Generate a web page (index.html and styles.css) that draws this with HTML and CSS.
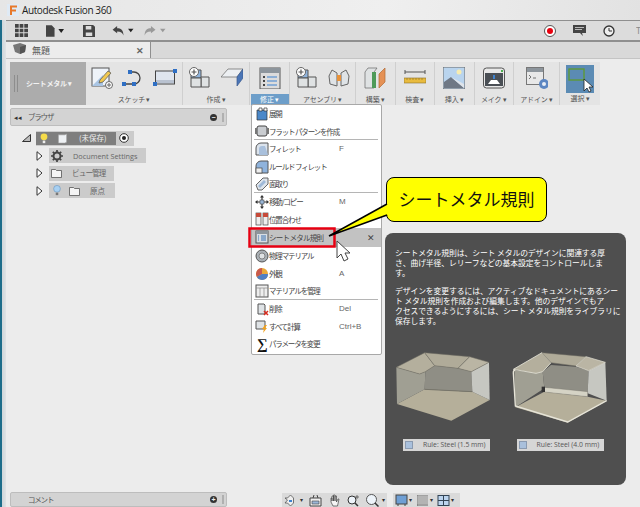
FILE: index.html
```html
<!DOCTYPE html>
<html lang="ja">
<head>
<meta charset="utf-8">
<title>Autodesk Fusion 360</title>
<link rel="stylesheet" href="styles.css">
</head>
<body>
<div class="window">
  <div class="glass"></div>
  <div class="app">
    <header class="titlebar">
      <svg class="logo" viewBox="0 0 12 12"><rect width="12" height="12" fill="#dfeaf5"/><path d="M3 1.5h7v2H5v2h4v2H5V11H3z" fill="#e8792b"/></svg>
      <span class="apptitle">Autodesk Fusion 360</span>
    </header>
    <div class="qat">
      <svg class="q1" viewBox="0 0 14 14"><path fill="#444" d="M0 0h4v4H0zM5 0h4v4H5zM10 0h4v4h-4zM0 5h4v4H0zM5 5h4v4H5zM10 5h4v4h-4zM0 10h4v4H0zM5 10h4v4H5zM10 10h4v4h-4z"/></svg>
      <svg class="q2" viewBox="0 0 20 12"><path fill="#444" d="M0 0h6l3 3v9H0z"/><path fill="#222" d="M13 4h6l-3 4z"/></svg>
      <svg class="q3" viewBox="0 0 13 13"><path fill="#444" d="M0 0h11l2 2v11H0z"/><path fill="#ddd" d="M3 1h6v4H3zM3 8h7v4H3z"/></svg>
      <svg class="q4" viewBox="0 0 24 11"><path fill="#444" d="M0 4l5-4v2.500c4 0 7 2 7 8-1-3-3-4.500-7-4.500V8z"/><path fill="#222" d="M17 3h6l-3 4z"/></svg>
      <svg class="q5" viewBox="0 0 24 11"><path fill="#9a9a9a" d="M12 4L7 0v2.500c-4 0-7 2-7 8 1-3 3-4.500 7-4.500V8z"/><path fill="#999" d="M17 3h6l-3 4z"/></svg>
      <span class="grow"></span>
      <svg class="r1" viewBox="0 0 12 12"><circle cx="6" cy="6" r="5.500" fill="#fff" stroke="#555"/><circle cx="6" cy="6" r="3" fill="#e8000f"/></svg>
      <svg class="r2" viewBox="0 0 13 11"><path fill="#444" d="M0 0h13v8H9l1 3-3-3H0z"/><path fill="#bbb" d="M2 2h9v1H2zM2 4h7v1H2z"/></svg>
      <svg class="r3" viewBox="0 0 12 12"><circle cx="6" cy="6" r="5" fill="#eee" stroke="#333" stroke-width="1.300"/><path d="M6 3v3h3" fill="none" stroke="#333"/></svg>
      <span class="cut">T</span>
    </div>
    <div class="tabs">
      <div class="tab">
        <svg class="tabicon" viewBox="0 0 13 11"><path fill="#777" d="M0 2l7-2 6 2-1 7-5 2-5-2z"/><path fill="#555" d="M7 4l6-2-1 7-5 2z"/></svg>
        <span class="tabname">無題</span>
        <span class="tabx">✕</span>
      </div>
    </div>
    <div class="ribbon">
      <div class="workspace-sel"><span class="grip"></span><span class="wstext">シートメタル ▾</span></div>

      <div class="group g-sketch">
        <div class="icons">
          <svg class="ic" viewBox="0 0 22 22"><rect x="1" y="1" width="17" height="18" fill="#eef3f9" stroke="#555"/><path d="M1 19L12 8l0 11z" fill="#a9c5e4"/><path d="M9 13l8-9 3 2-8 9-4 1z" fill="#f0c850" stroke="#555" stroke-width=".7"/><circle cx="18" cy="18" r="3.500" fill="#fff" stroke="#666"/><path d="M18 16v4M16 18h4" stroke="#666"/></svg>
          <svg class="ic ic-w" viewBox="0 0 24 22"><path d="M3 17h10a6 6 0 0 0 0-12H9" fill="none" stroke="#444" stroke-width="1.300"/><path d="M1 15h4v4H1zM11 15h4v4h-4zM7 3h4v4H7z" fill="#2f6fc4"/></svg>
          <svg class="ic ic-w" viewBox="0 0 24 22"><rect x="2.500" y="4" width="19" height="13" fill="#dfe5ee" stroke="#444"/><path d="M3 16h18v-3H3z" fill="#b9c2d0"/><path d="M0 15h4v4H0zM20 2h4v4h-4z" fill="#2f6fc4"/></svg>
        </div>
        <div class="glabel">スケッチ ▾</div>
      </div>

      <div class="group g-create">
        <div class="icons">
          <svg class="ic" viewBox="0 0 22 22"><path d="M2 3h10v8H2z" fill="#8fb3dc" stroke="#555"/><path d="M12 10h8v10h-8z" fill="#dfe2e3" stroke="#555"/><path d="M2 11h10v9H2z" fill="#dfe2e3" stroke="#555"/><circle cx="5" cy="5" r="4.500" fill="#fff" stroke="#666"/><path d="M5 2.500v5M2.500 5h5" stroke="#555" stroke-width="1.200"/></svg>
          <svg class="ic" viewBox="0 0 22 22"><path d="M7 2h15L16 10H0z" fill="#eceff2" stroke="#666" stroke-width=".7"/><path d="M16 10l6-8v9l-6 8z" fill="#4a75b6" stroke="#3a5a8f" stroke-width=".7"/></svg>
        </div>
        <div class="glabel">作成 ▾</div>
      </div>

      <div class="group g-modify">
        <div class="icons">
          <svg class="ic" viewBox="0 0 22 22"><rect x="1" y="1" width="20" height="21" fill="#dcdcdc" stroke="#555"/><path d="M1 1h20v5H1z" fill="#8d959c"/><path d="M4 9h2v2H4zM4 13h2v2H4zM4 17h2v2H4z" fill="#444"/><path d="M8 10h10M8 14h10M8 18h10" stroke="#3d82cf" stroke-width="1.200"/></svg>
        </div>
        <div class="glabel active">修正 ▾</div>
      </div>

      <div class="group g-assemble">
        <div class="icons">
          <svg class="ic" viewBox="0 0 22 22"><path d="M2 3h10v8H2z" fill="#8fb3dc" stroke="#555"/><path d="M12 10h8v10h-8z" fill="#dfe2e3" stroke="#555"/><path d="M2 11h10v9H2z" fill="#dfe2e3" stroke="#555"/><circle cx="5" cy="5" r="4.500" fill="#fff" stroke="#666"/><path d="M5 2.500v5M2.500 5h5" stroke="#555" stroke-width="1.200"/></svg>
          <svg class="ic" viewBox="0 0 22 22"><path d="M1 9l3-6 5 3v13l-7-2zM21 9l-3-6-5 3v13l7-2z" fill="#dfe3e6" stroke="#666"/><path d="M9 8h4v6H9z" fill="#e8923a"/></svg>
        </div>
        <div class="glabel">アセンブリ ▾</div>
      </div>

      <div class="group g-one">
        <div class="icons">
          <svg class="ic" viewBox="0 0 22 22"><path d="M1 5l3-4h9l-3 4v16H1z" fill="#dfe2e3" stroke="#666" stroke-width=".7"/><path d="M8 5h4v16H8z" fill="#4e9a58"/><path d="M15 21V7l6-6v14z" fill="#e59155" stroke="#b06a35" stroke-width=".7"/></svg>
        </div>
        <div class="glabel">構築 ▾</div>
      </div>

      <div class="group g-one">
        <div class="icons">
          <svg class="ic" viewBox="0 0 22 22"><path d="M1 5h20M1 3v4M21 3v4" stroke="#555"/><rect x="0" y="11" width="22" height="5" fill="#e9bb3e" stroke="#8a6f2a" stroke-width=".6"/><path d="M3 11v2M6 11v2M9 11v2M12 11v2M15 11v2M18 11v2" stroke="#8a6f2a" stroke-width=".6"/></svg>
        </div>
        <div class="glabel">検査 ▾</div>
      </div>

      <div class="group g-one">
        <div class="icons">
          <svg class="ic" viewBox="0 0 22 22"><rect x="0" y="0" width="22" height="22" fill="#b9d4ee" stroke="#666"/><circle cx="16" cy="5" r="2.500" fill="#f7ecb0"/><path d="M1 21V15l7-5 13 11z" fill="#6f7885"/><path d="M8 10l13 11v-4z" fill="#dfe4ea"/></svg>
        </div>
        <div class="glabel">挿入 ▾</div>
      </div>

      <div class="group g-one">
        <div class="icons">
          <svg class="ic" viewBox="0 0 22 22"><rect x="0.500" y="1" width="21" height="20" rx="3" fill="#e8e8e8" stroke="#555"/><rect x="2" y="6" width="18" height="13" fill="#4a4f55"/><path d="M5 17l3-4h6l3 4z" fill="#fff"/><path d="M10 8h2v4h-2z" fill="#3d82cf"/><path d="M18 3h2v2h-2z" fill="#4caf50"/></svg>
        </div>
        <div class="glabel">メイク ▾</div>
      </div>

      <div class="group g-addin">
        <div class="icons">
          <svg class="ic" viewBox="0 0 22 22"><rect x="0.500" y="0.500" width="17" height="17" fill="#e8e8e8" stroke="#777"/><path d="M1 1h16v4H1z" fill="#8d959c"/><path d="M3 8l2 2-2 2M7 11h3" stroke="#555" fill="none" stroke-width=".8"/><circle cx="18" cy="17" r="5" fill="#5c86c2"/><circle cx="18" cy="17" r="2" fill="#e8eef6"/></svg>
        </div>
        <div class="glabel">アドイン ▾</div>
      </div>

      <div class="group g-select">
        <div class="icons selbox">
          <svg class="ic-sel" viewBox="0 0 28 28"><rect x="3" y="4" width="15" height="11" fill="none" stroke="#5f9b2d" stroke-width="1.300"/><path d="M18 14v12l3-3 2 4 2-1-2-4h4z" fill="#fff" stroke="#222" stroke-width=".8"/></svg>
        </div>
        <div class="glabel">選択 ▾</div>
      </div>
    </div>

    <main class="workspace">
      <section class="panel">
        <span class="collapse">◂◂</span><span class="ptitle">ブラウザ</span>
        <span class="grow"></span>
        <span class="round">−</span><span class="pgrip"></span>
      </section>
      <ul class="tree">
        <li class="node root">
          <svg class="corner" viewBox="0 0 9 8"><path d="M0.500 7.500L8.500 0.500V7.500z" fill="#bbb" stroke="#333"/></svg>
          <div class="chip rootchip">
            <div class="rootdark">
              <svg class="bulb" viewBox="0 0 9 13"><circle cx="4.500" cy="4.500" r="4" fill="#f6dc4a"/><path d="M3 9h3v3H3z" fill="#eee"/></svg>
              <svg class="cube" viewBox="0 0 11 12"><path d="M1 2h7l2-1v9l-2 1H1z" fill="#eef1f4" stroke="#999" stroke-width=".6"/></svg>
              <span class="rootname">(未保存)</span>
            </div>
            <svg class="radio" viewBox="0 0 10 10"><circle cx="5" cy="5" r="4.300" fill="#fff" stroke="#333"/><circle cx="5" cy="5" r="2" fill="#222"/></svg>
          </div>
        </li>
        <li class="node">
          <svg class="tri" viewBox="0 0 7 10"><path d="M1 .7L6 5 1 9.300z" fill="#fff" stroke="#333"/></svg>
          <div class="chip c1">
            <svg class="gear" viewBox="0 0 12 12"><circle cx="6" cy="6" r="3.500" fill="none" stroke="#444" stroke-width="2"/><path d="M6 0v2M6 10v2M0 6h2M10 6h2M1.800 1.800l1.400 1.400M8.800 8.800l1.400 1.400M10.200 1.800L8.800 3.200M3.200 8.800l-1.400 1.400" stroke="#444" stroke-width="1.700"/></svg>
            <span class="nm n1">Document Settings</span>
          </div>
        </li>
        <li class="node">
          <svg class="tri" viewBox="0 0 7 10"><path d="M1 .7L6 5 1 9.300z" fill="#fff" stroke="#333"/></svg>
          <div class="chip c2">
            <svg class="folder" viewBox="0 0 11 10"><path d="M.5 1.500h4l1 1h5v7h-10z" fill="#f4f4f4" stroke="#555" stroke-width=".8"/></svg>
            <span class="nm n2">ビュー管理</span>
          </div>
        </li>
        <li class="node">
          <svg class="tri" viewBox="0 0 7 10"><path d="M1 .7L6 5 1 9.300z" fill="#fff" stroke="#333"/></svg>
          <div class="chip c3">
            <svg class="bulb2" viewBox="0 0 9 13"><circle cx="4.500" cy="4.500" r="4" fill="#a8d0f2" stroke="#5b8cb8" stroke-width=".6"/><path d="M3 9h3v3H3z" fill="#777"/></svg>
            <svg class="folder" viewBox="0 0 11 10"><path d="M.5 1.500h4l1 1h5v7h-10z" fill="#f4f4f4" stroke="#555" stroke-width=".8"/></svg>
            <span class="nm n3">原点</span>
          </div>
        </li>
      </ul>
      <div class="grow"></div>
      <footer class="bottom">
        <section class="panel comment">
          <span class="ptitle ct">コメント</span>
          <span class="grow"></span>
          <span class="round">+</span><span class="pgrip"></span>
        </section>
        <div class="navbar n-a">
          <svg class="nv" viewBox="0 0 13 13"><path d="M6.500 1l3 3v5l-3 3-3-3H1l2.500-3L1 4h2.500z" fill="#eee" stroke="#555" stroke-width=".8"/><path d="M5 6h3v2H5z" fill="#3d82cf"/></svg><i class="dn">▾</i>
          <svg class="nv" viewBox="0 0 13 13"><path d="M1 4h11v8H1z" fill="#eee" stroke="#444"/><path d="M3 7h7v3H3z" fill="#9ab6d6" stroke="#444" stroke-width=".6"/><path d="M4 4l1-3M9 4L8 1" stroke="#444"/></svg>
          <svg class="nv" viewBox="0 0 13 13"><path d="M3 8V4h1v3V2h1.500v5-6H7v6-5h1.500v6l1.500-3h1L9.500 12H5z" fill="#f4f4f4" stroke="#444" stroke-width=".7"/></svg>
          <svg class="nv" viewBox="0 0 13 13"><circle cx="5" cy="6" r="4" fill="#eef4fa" stroke="#333"/><path d="M8 9l3 3" stroke="#333" stroke-width="1.500"/><path d="M10 1v4M12 3h-4" stroke="#444" stroke-width=".7"/></svg>
          <svg class="nv" viewBox="0 0 13 13"><circle cx="5.500" cy="5.500" r="5" fill="#eef4fa" stroke="#555"/><path d="M9 9l3.500 3.500" stroke="#333" stroke-width="1.500"/></svg><i class="dn">▾</i>
        </div>
        <div class="navbar n-b">
          <svg class="nv" viewBox="0 0 13 13"><rect x="1" y="1" width="11" height="9" fill="#6f9fd4" stroke="#444"/><path d="M3 10v2M10 10v2" stroke="#444"/></svg><i class="dn">▾</i>
          <svg class="nv" viewBox="0 0 13 13"><path fill="#888" d="M1 1h11v11H1z"/><path stroke="#ddd" stroke-width=".6" d="M3 1v11M5 1v11M7 1v11M9 1v11M11 1v11M1 3h11M1 5h11M1 7h11M1 9h11"/></svg><i class="dn">▾</i>
          <svg class="nv" viewBox="0 0 13 13"><rect x="1" y="1.500" width="11" height="10" fill="#bcd4ee" stroke="#345"/><path d="M6.500 1.500v10M1 6.500h11" stroke="#345"/></svg><i class="dn">▾</i>
        </div>
      </footer>

      <nav class="menu">
        <div class="mi"><svg class="mic" viewBox="0 0 14 14"><path d="M2 3h10v10H2z" fill="#4b88c9" stroke="#333" stroke-width=".7"/><path d="M4 1h3v3H4zM9 1h3v3H9z" fill="#fff" stroke="#333" stroke-width=".7"/></svg><span class="ml">展開</span></div>
        <div class="mi sep"><svg class="mic" viewBox="0 0 14 14"><rect x="2" y="2" width="10" height="10" rx="2" fill="#c9ccd0" stroke="#444"/><path d="M0 4h2v6H0zM12 4h2v6h-2z" fill="#777"/></svg><span class="ml">フラット パターンを作成</span></div>
        <div class="mi"><svg class="mic" viewBox="0 0 14 14"><path d="M1 13V6a5 5 0 0 1 5-5h7v12z" fill="#dbe3ec" stroke="#555"/><path d="M4 13V7a3 3 0 0 1 3-3h3l3 9z" fill="#a9c0dc"/></svg><span class="ml">フィレット</span><span class="sc">F</span></div>
        <div class="mi"><svg class="mic" viewBox="0 0 14 14"><path d="M1 13V6a5 5 0 0 1 5-5h7v12z" fill="#8fb3dc" stroke="#555"/><rect x="1" y="8" width="6" height="5" fill="#eee" stroke="#444" stroke-width=".7"/></svg><span class="ml">ルールド フィレット</span></div>
        <div class="mi sep"><svg class="mic" viewBox="0 0 14 14"><path d="M1 8l7-7h5v6l-6 6H3z" fill="#dfe5ec" stroke="#666"/><path d="M3 9l6-6 2 2-6 6z" fill="#9fb9d8"/></svg><span class="ml">面取り</span></div>
        <div class="mi"><svg class="mic" viewBox="0 0 14 14"><path d="M7 1v12M1 7h12" stroke="#333" stroke-width="1.200"/><path d="M7 0l2 2.500H5zM7 14l2-2.500H5zM0 7l2.500-2v4zM14 7l-2.500-2v4z" fill="#333"/><rect x="5" y="5" width="4" height="4" fill="#9ab6d6" stroke="#333" stroke-width=".5"/></svg><span class="ml">移動/コピー</span><span class="sc">M</span></div>
        <div class="mi"><svg class="mic" viewBox="0 0 14 14"><rect x="1" y="1" width="5" height="12" fill="#eee" stroke="#444" stroke-width=".7"/><rect x="8" y="1" width="5" height="12" fill="#eee" stroke="#444" stroke-width=".7"/><path d="M1 1h5v4H1zM8 1h5v4H8z" fill="#c74b3a"/></svg><span class="ml">位置合わせ</span></div>
        <div class="mi hot"><svg class="mic" viewBox="0 0 14 14"><rect x="1" y="1" width="12" height="12" fill="#d7dde3" stroke="#555"/><path d="M1 1h12v3H1z" fill="#8d959c"/><path d="M3 6h1M3 8h1M3 10h1M6 6h5M6 8h5M6 10h5" stroke="#3d72b0"/></svg><span class="ml">シートメタル規則</span><span class="hotx">✕</span></div>
        <div class="mi"><svg class="mic" viewBox="0 0 14 14"><circle cx="7" cy="7" r="6" fill="#aab0b5" stroke="#555"/><circle cx="7" cy="7" r="3" fill="#dfe2e4" stroke="#666" stroke-width=".7"/></svg><span class="ml">物理マテリアル</span></div>
        <div class="mi"><svg class="mic" viewBox="0 0 14 14"><circle cx="7" cy="7" r="6" fill="#e9a93a"/><path d="M7 7V1a6 6 0 0 0-5.200 9z" fill="#c95a4c"/><path d="M7 7l-5.200 3A6 6 0 0 0 13 7z" fill="#4f7fc4"/></svg><span class="ml">外観</span><span class="sc">A</span></div>
        <div class="mi sep"><svg class="mic" viewBox="0 0 14 14"><rect x="1" y="1" width="12" height="12" fill="#eee" stroke="#555"/><path d="M1 4h12M5 4v9M9 4v9" stroke="#888" stroke-width=".7"/></svg><span class="ml">マテリアルを管理</span></div>
        <div class="mi"><svg class="mic" viewBox="0 0 14 14"><path d="M3 2h6l1 1v9H3z" fill="#dfe3e6" stroke="#555"/><path d="M9 9l4 4M13 9l-4 4" stroke="#d92b1e" stroke-width="1.500"/></svg><span class="ml">削除</span><span class="sc">Del</span></div>
        <div class="mi"><svg class="mic" viewBox="0 0 14 14"><path d="M1 2h9v8H1z" fill="#dfe3e6" stroke="#555"/><path d="M10 6l-3 4h2l-1 4 4-5h-2l2-3z" fill="#f1a21f"/></svg><span class="ml">すべて計算</span><span class="sc">Ctrl+B</span></div>
        <div class="mi"><span class="sigma">∑</span><span class="ml">パラメータを変更</span></div>
      </nav>
    </main>
  </div>
</div>

<svg class="redbox" viewBox="0 0 88 21"><rect x="1.500" y="1.500" width="85" height="18" fill="none" stroke="#e60012" stroke-width="2.500"/></svg>
<svg class="cursor" viewBox="0 0 15 23"><path d="M1 1v17l4-4 3 7 4-2-3-6h5z" fill="#fff" stroke="#444"/></svg>
<div class="callout">シートメタル規則</div>
<svg class="tail" viewBox="0 0 66 40"><path d="M2 36L62 3v11z" fill="#ffff00"/><path d="M60 4L2 36l58-21" fill="none" stroke="#000" stroke-width="1.500"/></svg>

<aside class="tip">
  <p class="tp">シートメタル規則は、シート メタルのデザインに関連する厚<br>さ、曲げ半径、レリーフなどの基本設定をコントロールしま<br>す。</p>
  <p class="tp">デザインを変更するには、アクティブなドキュメントにあるシー<br>ト メタル規則を作成および編集します。他のデザインでもア<br>クセスできるようにするには、シート メタル規則をライブラリに<br>保存します。</p>
  <div class="figs">
    <figure class="fig">
      <svg class="shape" viewBox="40 60 300 225">
        <path d="M52 222L135 178 278 185 330 210 215 272z" fill="#b5af9a"/>
        <path d="M50 112L120 132 137 125 135 178 52 222z" fill="#a09f93"/>
        <path d="M137 125L165 107 235 115 275 125 278 185 135 178z" fill="#8f8e85"/>
        <path d="M275 125L328 97 330 210 278 185z" fill="#c6c7c1"/>
        <path d="M50 112L135 68 165 107 137 125 120 132z" fill="#b4af9d" stroke="#6f6d63" stroke-width="1.500"/>
        <path d="M135 68L270 80 235 115 165 107z" fill="#b0ab99" stroke="#6f6d63" stroke-width="1.500"/>
        <path d="M270 80L328 97 275 125 235 115z" fill="#bab5a4" stroke="#6f6d63" stroke-width="1.500"/>
        <path d="M135 178L278 185" stroke="#77756a" stroke-width="3"/>
      </svg>
      <figcaption class="cap"><i class="capic"></i>Rule: Steel (1.5 mm)</figcaption>
    </figure>
    <figure class="fig f2">
      <svg class="shape" viewBox="395 60 300 225">
        <path d="M408 232L495 185 625 200 682 212 565 278z" fill="#b5af9a"/>
        <path d="M405 120L470 128 490 125 495 175 408 232z" fill="#a09f93"/>
        <path d="M490 125L515 105 590 110 628 122 625 190 495 172z" fill="#8f8e85"/>
        <path d="M628 122L678 97 682 212 625 190z" fill="#c6c7c1"/>
        <path d="M495 172L625 185 625 200 495 186z" fill="#d5d3c5" stroke="#6f6d63"/>
        <path d="M408 232L495 186 440 215z" fill="#d5d3c5"/>
        <path d="M408 120Q401 120 402 130L408 228 565 276 682 212" fill="none" stroke="#e6e4d8" stroke-width="4"/>
        <path d="M402 118L488 68 515 98 490 125 470 130z" fill="#b4af9d" stroke="#e6e4d8" stroke-width="2.500"/>
        <path d="M488 68L620 80 590 108 515 98z" fill="#b0ab99" stroke="#6f6d63" stroke-width="1.500"/>
        <path d="M620 80L678 97 628 122 590 108z" fill="#bab5a4" stroke="#e6e4d8" stroke-width="2"/>
        <path d="M487 170h10v16h-10z" fill="#333"/>
      </svg>
      <figcaption class="cap"><i class="capic"></i>Rule: Steel (4.0 mm)</figcaption>
    </figure>
  </div>
</aside>
</body>
</html>
```
FILE: styles.css
```css
* { box-sizing: border-box; }
html, body { margin: 0; padding: 0; }
body {
  width: 640px; height: 507px; overflow: hidden; position: relative;
  background: #ececec; color: #4a4a4a;
  font-family: "Noto Sans CJK JP", "Liberation Sans", sans-serif;
  font-size: 8px; line-height: 1;
}
svg { display: block; flex: none; }
ul, p, figure { margin: 0; padding: 0; list-style: none; }
i { font-style: normal; }
.grow { flex: 1; }
.window { display: flex; width: 640px; height: 507px; }
.glass { width: 6px; background: linear-gradient(90deg, #1d6d8a 0, #1d6d8a 2px, #cfd6da 2px, #dfe3e5 100%); }
.app { flex: 1; display: flex; flex-direction: column; min-width: 0; }

.titlebar { height: 20px; flex: none; display: flex; align-items: center; background: linear-gradient(100deg, #e6e6e6, #efefef 60%, #e2e2e2); margin-left: -6px; padding-left: 7px; gap: 3px; }
.logo { width: 12px; height: 12px; }
.apptitle { font: 10px "Open Sans", "Liberation Sans", sans-serif; letter-spacing: -.4px; color: #222; }
.qat { height: 22px; flex: none; display: flex; align-items: center; background: #dcdcdc; border-top: 1px solid #8f8f8f; border-bottom: 2px solid #8f8f8f; padding-left: 9px; }
.q1 { width: 13px; height: 13px; }
.q2 { width: 19px; height: 12px; margin-left: 18px; }
.q3 { width: 12px; height: 12px; margin-left: 18px; }
.q4 { width: 23px; height: 10px; margin-left: 17px; }
.q5 { width: 23px; height: 10px; margin-left: 9px; }
.r1 { width: 12px; height: 12px; }
.r2 { width: 13px; height: 11px; margin-left: 17px; }
.r3 { width: 12px; height: 12px; margin-left: 17px; }
.cut { width: 4px; margin-left: 21px; font: 9px "Open Sans", sans-serif; color: #888; overflow: hidden; }
.tabs { height: 17px; flex: none; background: #d9d9d9; display: flex; border-bottom: 1px solid #c4c4c4; }
.tab { width: 145px; background: #ececec; border-right: 1px solid #8f8f8f; display: flex; align-items: center; padding: 0 6px 0 7px; }
.tabicon { width: 13px; height: 11px; margin-top: -3px; }
.tabname { margin-left: 6px; color: #555; font-size: 9px; flex: 1; }
.tabx { font-size: 9px; color: #666; font-weight: 700; }

.ribbon { height: 43px; flex: none; margin: 3px 0 0 4px; width: 590px; display: flex; background: #e4e4e4; }
.workspace-sel { width: 76px; background: #acacac; display: flex; align-items: center; color: #f2f2f2; font-weight: 700; font-size: 7px; letter-spacing: -.2px; padding-left: 4px; }
.grip { width: 4px; height: 17px; border-left: 1px solid #8d8d8d; border-right: 1px solid #8d8d8d; margin-right: 8px; }
.group { display: flex; flex-direction: column; align-items: center; border-right: 1px solid #cfcfcf; }
.icons { flex: 1; display: flex; align-items: center; gap: 10px; padding-bottom: 1px; }
.ic { width: 22px; height: 22px; }
.ic-w { width: 24px; }
.g-sketch { width: 97px; }
.g-sketch .icons { gap: 8px; }
.g-create { width: 67px; }
.g-modify { width: 40px; }
.g-assemble { width: 66px; }
.g-one { width: 39.500px; }
.g-addin { width: 46px; }
.g-select { width: 40px; border-right: 0; }
.selbox { flex: none; width: 28px; height: 28px; margin-top: 3px; background: #5b8bb4; display: block; padding: 0; }
.ic-sel { width: 28px; height: 28px; }
.glabel { height: 11px; width: 100%; text-align: center; font-size: 7px; letter-spacing: -.2px; color: #555; line-height: 10px; white-space: nowrap; }
.glabel.active { background: #6d9ec9; color: #fff; width: 38px; }

.workspace { flex: 1; position: relative; padding: 3px 0 0 4px; display: flex; flex-direction: column; min-height: 0; }
.panel { width: 217px; height: 18px; flex: none; background: #d3d3d3; border: 1px solid #bdbdbd; border-radius: 2px; display: flex; align-items: center; padding: 0 2px 0 3px; }
.collapse { font-size: 7px; color: #333; width: 14px; }
.ptitle { color: #555; font-size: 7.500px; letter-spacing: -1.200px; }
.round { width: 7px; height: 7px; border-radius: 50%; background: #333; color: #eee; font: 700 7px/7px "Liberation Sans", sans-serif; text-align: center; }
.pgrip { width: 2px; height: 9px; background: #b0b0b0; margin-left: 5px; }
.tree { padding-top: 4.500px; display: flex; flex-direction: column; gap: 2.500px; }
.node { display: flex; align-items: center; height: 15px; padding-left: 26px; }
.root { padding-left: 12px; }
.corner { width: 9px; height: 8px; margin-right: 5px; }
.tri { width: 7px; height: 10px; margin-right: 6px; }
.chip { height: 15px; background: #cbcbcb; display: flex; align-items: center; }
.rootchip { width: 98px; }
.rootdark { width: 80px; height: 13px; background: #7e7e7e; display: flex; align-items: center; padding-left: 4px; }
.bulb { width: 8px; height: 11px; }
.cube { width: 11px; height: 11px; margin-left: 9px; }
.rootname { color: #eee; font-size: 7.500px; margin-left: 11px; white-space: nowrap; }
.radio { width: 10px; height: 10px; margin-left: 3px; }
.gear { width: 12px; height: 12px; margin-left: 2px; }
.c1 { width: 97px; }
.c2 { width: 65px; }
.c3 { width: 66px; }
.folder { width: 11px; height: 10px; }
.c2 .folder { margin-left: 2px; }
.bulb2 { width: 8px; height: 11px; margin-left: 4px; margin-right: 8px; }
.nm { color: #666; white-space: nowrap; }
.n1 { font: 7.300px "Open Sans", "Liberation Sans", sans-serif; margin-left: 10px; }
.n2 { font-size: 7.500px; margin-left: 10px; letter-spacing: -.8px; }
.n3 { font-size: 7.500px; margin-left: 10px; }

.bottom { display: flex; align-items: flex-end; height: 15px; flex: none; }
.comment { height: 15px; margin-right: 55px; }
.ct { margin-left: 14px; font-size: 7.500px; }
.navbar { height: 14px; background: #dadada; display: flex; align-items: center; padding: 0 2px; }
.n-a { width: 105px; margin-right: 6px; gap: 6px; }
.n-b { width: 67px; gap: 4px; }
.nv { width: 13px; height: 13px; }
.dn { font-size: 6px; color: #333; margin-left: -3px; }

.menu { position: absolute; left: 245px; top: -1px; width: 131px; height: 251px; background: #fff; border: 1px solid #a8a8a8; border-radius: 2px; }
.mi { position: relative; height: 17.600px; display: flex; align-items: center; padding-left: 3px; color: #444; font-size: 7.500px; letter-spacing: -1.150px; white-space: nowrap; }
.mic { width: 14px; height: 14px; }
.ml { flex: none; }
.sep::after { content: ""; position: absolute; left: 2px; right: 3px; bottom: 0; height: 1px; background: #b5b5b5; }
.sc { position: absolute; left: 87px; font: 8px "Liberation Sans", sans-serif; letter-spacing: 0; color: #666; }
.hot { background: #c2c2c2; height: 18.600px; margin-bottom: 0.500px; letter-spacing: -.7px; }
.hotx { position: absolute; right: 6px; font-size: 9px; letter-spacing: 0; color: #444; }
.sigma { width: 14px; font: 700 15px/1 "Liberation Serif", serif; letter-spacing: 0; color: #111; text-align: center; }

.redbox { position: absolute; left: 248px; top: 227px; width: 88px; height: 21px; }
.cursor { position: absolute; left: 336px; top: 240px; width: 15px; height: 23px; }
.tail { position: absolute; left: 327px; top: 200px; width: 66px; height: 40px; }
.callout { position: absolute; left: 386px; top: 177px; width: 161px; height: 45px; background: #ffff00; border: 1.500px solid #000; border-radius: 8px; color: #111; font-size: 17px; line-height: 42px; text-align: center; white-space: nowrap; }

.tip { position: absolute; left: 385px; top: 233px; width: 241px; height: 252px; background: #4f4f4f; border-radius: 8px; padding: 15px 10px 0; color: #fff; font-size: 7.800px; letter-spacing: -.08px; line-height: 9.800px; white-space: nowrap; }
.tp { margin-bottom: 9px; }
.figs { display: flex; position: absolute; left: 8px; top: 117px; }
.fig { width: 100px; }
.f2 { margin-left: 18.300px; }
.shape { width: 100px; height: 75px; margin-bottom: 14px; }
.cap { width: 87px; height: 12px; margin-left: 10px; background: #d6d6d6; color: #555; font: 6.800px/12px "Open Sans", "Liberation Sans", sans-serif; letter-spacing: 0; display: flex; align-items: center; padding-left: 2px; gap: 10px; }
.f2 .cap { margin-left: 5.300px; }
.capic { width: 8px; height: 8px; background: #a9c0dc; border: 1px solid #8a9ab0; flex: none; }
```
